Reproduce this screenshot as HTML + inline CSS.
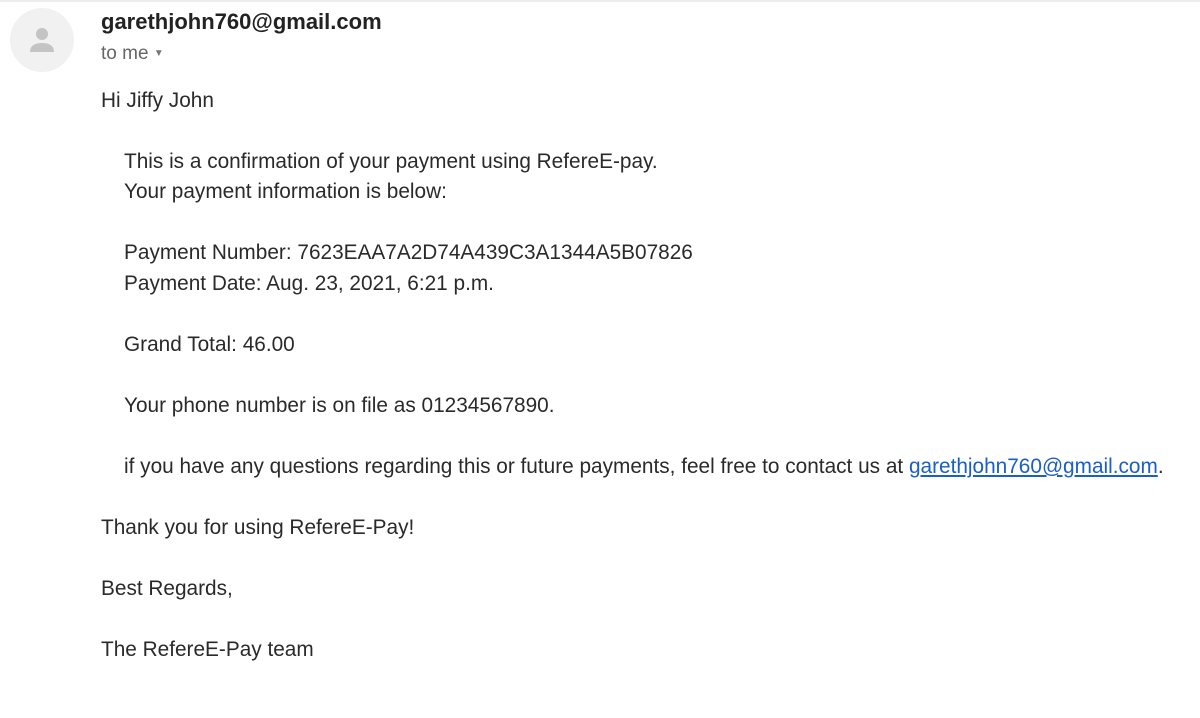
<!DOCTYPE html>
<html><head><style>
body{margin:0;width:1200px;height:718px;background:#fff;font-family:"Liberation Sans",Arial,sans-serif;color:#2a2a2a;overflow:hidden;position:relative}
.top{position:absolute;left:0;top:0;width:1200px;height:2px;background:#eee}
.av{position:absolute;left:10px;top:8px;width:64px;height:64px;border-radius:50%;background:#f1f1f1}
.from{position:absolute;left:101px;top:9px;font-weight:bold;font-size:22px;color:#222}
.to{position:absolute;left:101px;top:43px;font-size:19px;color:#666}
.l{position:absolute;font-size:20.8px;white-space:nowrap;line-height:24px}
a{color:#1a5ec9;text-decoration:underline}
</style></head><body>
<div class="top"></div>
<div class="av"><svg width="64" height="64" viewBox="0 0 64 64"><circle cx="32" cy="26" r="6" fill="#c4c4c4"/><path d="M20 44c0-7 6-9 12-9s12 2 12 9z" fill="#c4c4c4"/></svg></div>
<div class="from">garethjohn760@gmail.com</div>
<div class="to">to me <span style="font-size:10px;color:#777;vertical-align:3px">&#9660;</span></div>
<div class="l" style="left:101px;top:89px">Hi Jiffy John</div>
<div class="l" style="left:124px;top:150px">This is a confirmation of your payment using RefereE-pay.</div>
<div class="l" style="left:124px;top:180px">Your payment information is below:</div>
<div class="l" style="left:124px;top:241px">Payment Number: 7623EAA7A2D74A439C3A1344A5B07826</div>
<div class="l" style="left:124px;top:272px">Payment Date: Aug. 23, 2021, 6:21 p.m.</div>
<div class="l" style="left:124px;top:333px">Grand Total: 46.00</div>
<div class="l" style="left:124px;top:394px">Your phone number is on file as 01234567890.</div>
<div class="l" style="left:124px;top:455px">if you have any questions regarding this or future payments, feel free to contact us at <a>garethjohn760@gmail.com</a>.</div>
<div class="l" style="left:101px;top:516px">Thank you for using RefereE-Pay!</div>
<div class="l" style="left:101px;top:577px">Best Regards,</div>
<div class="l" style="left:101px;top:638px">The RefereE-Pay team</div>
</body></html>
